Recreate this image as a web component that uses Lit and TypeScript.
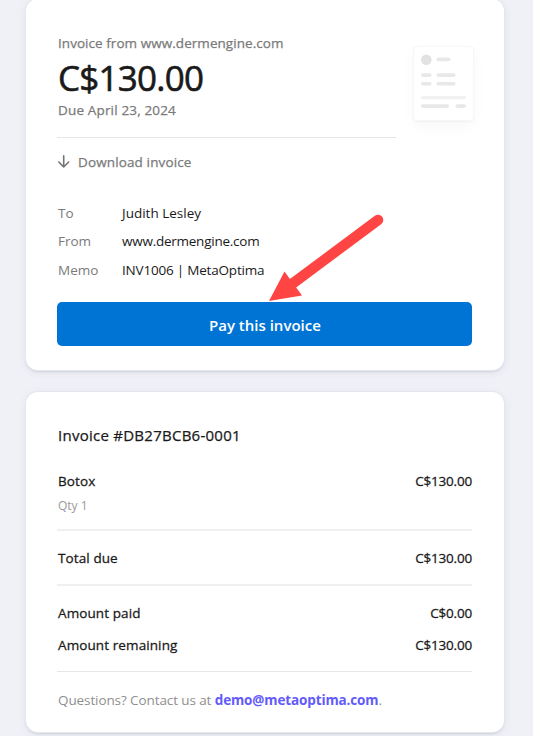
import { LitElement, html, css, svg } from "lit";
import { customElement } from "lit/decorators.js";

const details = [
  { label: "To", value: "Judith Lesley", cls: "v-to" },
  { label: "From", value: "www.dermengine.com", cls: "v-from" },
  { label: "Memo", value: "INV1006 | MetaOptima", cls: "v-memo" },
];

@customElement("invoice-thumbnail")
class InvoiceThumbnail extends LitElement {
  static styles = css`
    :host {
      display: block;
      width: 59px;
      height: 73px;
      border-radius: 3px;
      background: #fff;
      box-shadow: 0 0 0 1px #f7f7f7, 0 1px 3px rgba(0, 0, 0, 0.07), 0 6px 16px rgba(0, 0, 0, 0.035);
    }
    svg { display: block; }
  `;
  render() {
    const bars = [
      [22.5, 10.6, 14], [7, 26.3, 10.5], [22.5, 26.3, 19], [7, 34.9, 10.5], [22.5, 34.9, 19],
      [7, 57.3, 28], [41.5, 57.3, 10.5],
    ];
    return html`<svg width="59" height="73" viewBox="0 0 59 73">
      <circle cx="12.3" cy="12.7" r="5.3" fill="#e2e2e2" />
      ${bars.map(([x, y, w]) => svg`<rect x=${x} y=${y} width=${w} height="3.6" rx="1.8" fill="#e8e8e8" />`)}
      <rect x="7" y="49" width="45" height="3.2" rx="1.6" fill="#f1f1f1" />
    </svg>`;
  }
}

@customElement("app-root")
class AppRoot extends LitElement {
  static styles = css`
    :host {
      display: block;
      box-sizing: border-box;
      height: 736px;
      overflow: hidden;
      padding: 0 29px 0 26px;
      background: #f0f1f7;
      color: #1a1a1a;
      font: 400 13.5px "Open Sans", "Noto Sans", sans-serif;
      position: relative;
      white-space: nowrap;
    }
    .card {
      box-sizing: border-box;
      width: 478px;
      padding: 0 32px;
      border-radius: 12px;
      background: #fff;
      box-shadow: 0 0 0 1px #e3e7ee, 0 2px 2px rgba(60, 66, 87, 0.12), 0 2px 8px rgba(60, 66, 87, 0.09);
    }
    .summary { height: 371px; margin-top: -1px; padding-top: 33px; }
    .breakdown { height: 340px; margin-top: 22px; padding-top: 31px; }
    .top { display: flex; justify-content: space-between; height: 106px; }
    .top-text { box-sizing: border-box; width: 339px; border-bottom: 1px solid #e6e6e6; margin-left: -1px; padding-left: 1px; }
    invoice-thumbnail { margin: 15px -0.5px 0 0; }
    .line { display: flex; justify-content: space-between; align-items: center; height: 22px; }
    .muted { color: #7a7a7a; -webkit-text-stroke: 0.25px #7a7a7a; }
    .amount { display: flex; align-items: center; height: 46px; padding-bottom: 2px; font-size: 35px; letter-spacing: -0.75px; -webkit-text-stroke: 0.6px #1a1a1a; }
    .due { height: 16px; }
    .t-from { letter-spacing: 0.05px; }
    .t-due { letter-spacing: 0.16px; }
    .t-download { letter-spacing: 0.13px; }
    .download { display: flex; align-items: center; height: 47px; padding-bottom: 2px; gap: 8px; }
    .details { display: grid; grid-template-columns: 64px 1fr; grid-template-rows: 28px 28px 29px; align-items: center; padding-top: 12px; height: 105px; box-sizing: border-box; }
    .label { color: #7a7a7a; }
    .v-from { letter-spacing: -0.25px; }
    .v-memo { letter-spacing: -0.2px; }
    .pay {
      display: flex; align-items: center; justify-content: center;
      width: 415px; height: 43.5px; margin: 10px 0 0 -0.6px; padding: 2px 0 0; box-sizing: border-box;
      border: 0; border-radius: 5px; background: #0074d4; color: #fff;
      font: 600 15px "Open Sans", "Noto Sans", sans-serif;
    }
    .title { font-size: 15px; letter-spacing: 0.26px; height: 24px; -webkit-text-stroke: 0.25px #1a1a1a; }
    .strong { letter-spacing: 0.1px; -webkit-text-stroke: 0.27px #1a1a1a; }
    .price { letter-spacing: -0.2px; }
    .item { margin-top: 23px; }
    .qty { margin: 2px 0 13px; color: #999; font-size: 12px; }
    .total { margin: 16px 0 15px; }
    .paid { margin: 16px 0 10px; }
    .remaining { margin-bottom: 15px; }
    hr { margin: 0 -0.3px 0 -0.7px; border: 0; height: 2px; background: #f0f0f0; }
    hr.thin { height: 1px; background: #e6e6e6; }
    .ask { margin-top: 17px; color: #8f8f8f; justify-content: flex-start; white-space: pre; letter-spacing: -0.1px; }
    .mail { color: #625afa; font-weight: 700; letter-spacing: -0.13px; }
    .arrow { position: absolute; left: 264px; top: 208px; }
  `;

  render() {
    return html`
      <section class="card summary">
        <div class="top">
          <div class="top-text">
            <div class="line muted"><span class="t-from">Invoice from www.dermengine.com</span></div>
            <div class="amount">C$130.00</div>
            <div class="line due muted"><span class="t-due">Due April 23, 2024</span></div>
          </div>
          <invoice-thumbnail></invoice-thumbnail>
        </div>
        <div class="download muted">
          <svg width="12" height="14" viewBox="0 0 12 14" fill="none" stroke="#757575" stroke-width="1.6" stroke-linecap="round" stroke-linejoin="round">
            <path d="M5.7 .8V12M.8 7 5.7 12l4.9-5" />
          </svg>
          <span class="t-download">Download invoice</span>
        </div>
        <div class="details">
          ${details.map((d) => html`<span class="label">${d.label}</span><span class=${d.cls}>${d.value}</span>`)}
        </div>
        <button class="pay">Pay this invoice</button>
      </section>
      <section class="card breakdown">
        <div class="line title">Invoice #DB27BCB6-0001</div>
        <div class="line strong item"><span>Botox</span><span class="price">C$130.00</span></div>
        <div class="line qty">Qty 1</div>
        <hr />
        <div class="line strong total"><span>Total due</span><span class="price">C$130.00</span></div>
        <hr />
        <div class="line strong paid"><span>Amount paid</span><span class="price">C$0.00</span></div>
        <div class="line strong remaining"><span>Amount remaining</span><span class="price">C$130.00</span></div>
        <hr class="thin" />
        <div class="line ask"><span>Questions? Contact us at </span><span class="mail">demo@metaoptima.com</span><span>.</span></div>
      </section>
      <svg class="arrow" width="124" height="98" viewBox="264 208 124 98">
        <path d="M378 220 292 284" stroke="#ff4444" stroke-width="10.5" stroke-linecap="round" />
        <path d="M269 301 284.5 271.5 302 295.5Z" fill="#ff4444" />
      </svg>
    `;
  }
}
